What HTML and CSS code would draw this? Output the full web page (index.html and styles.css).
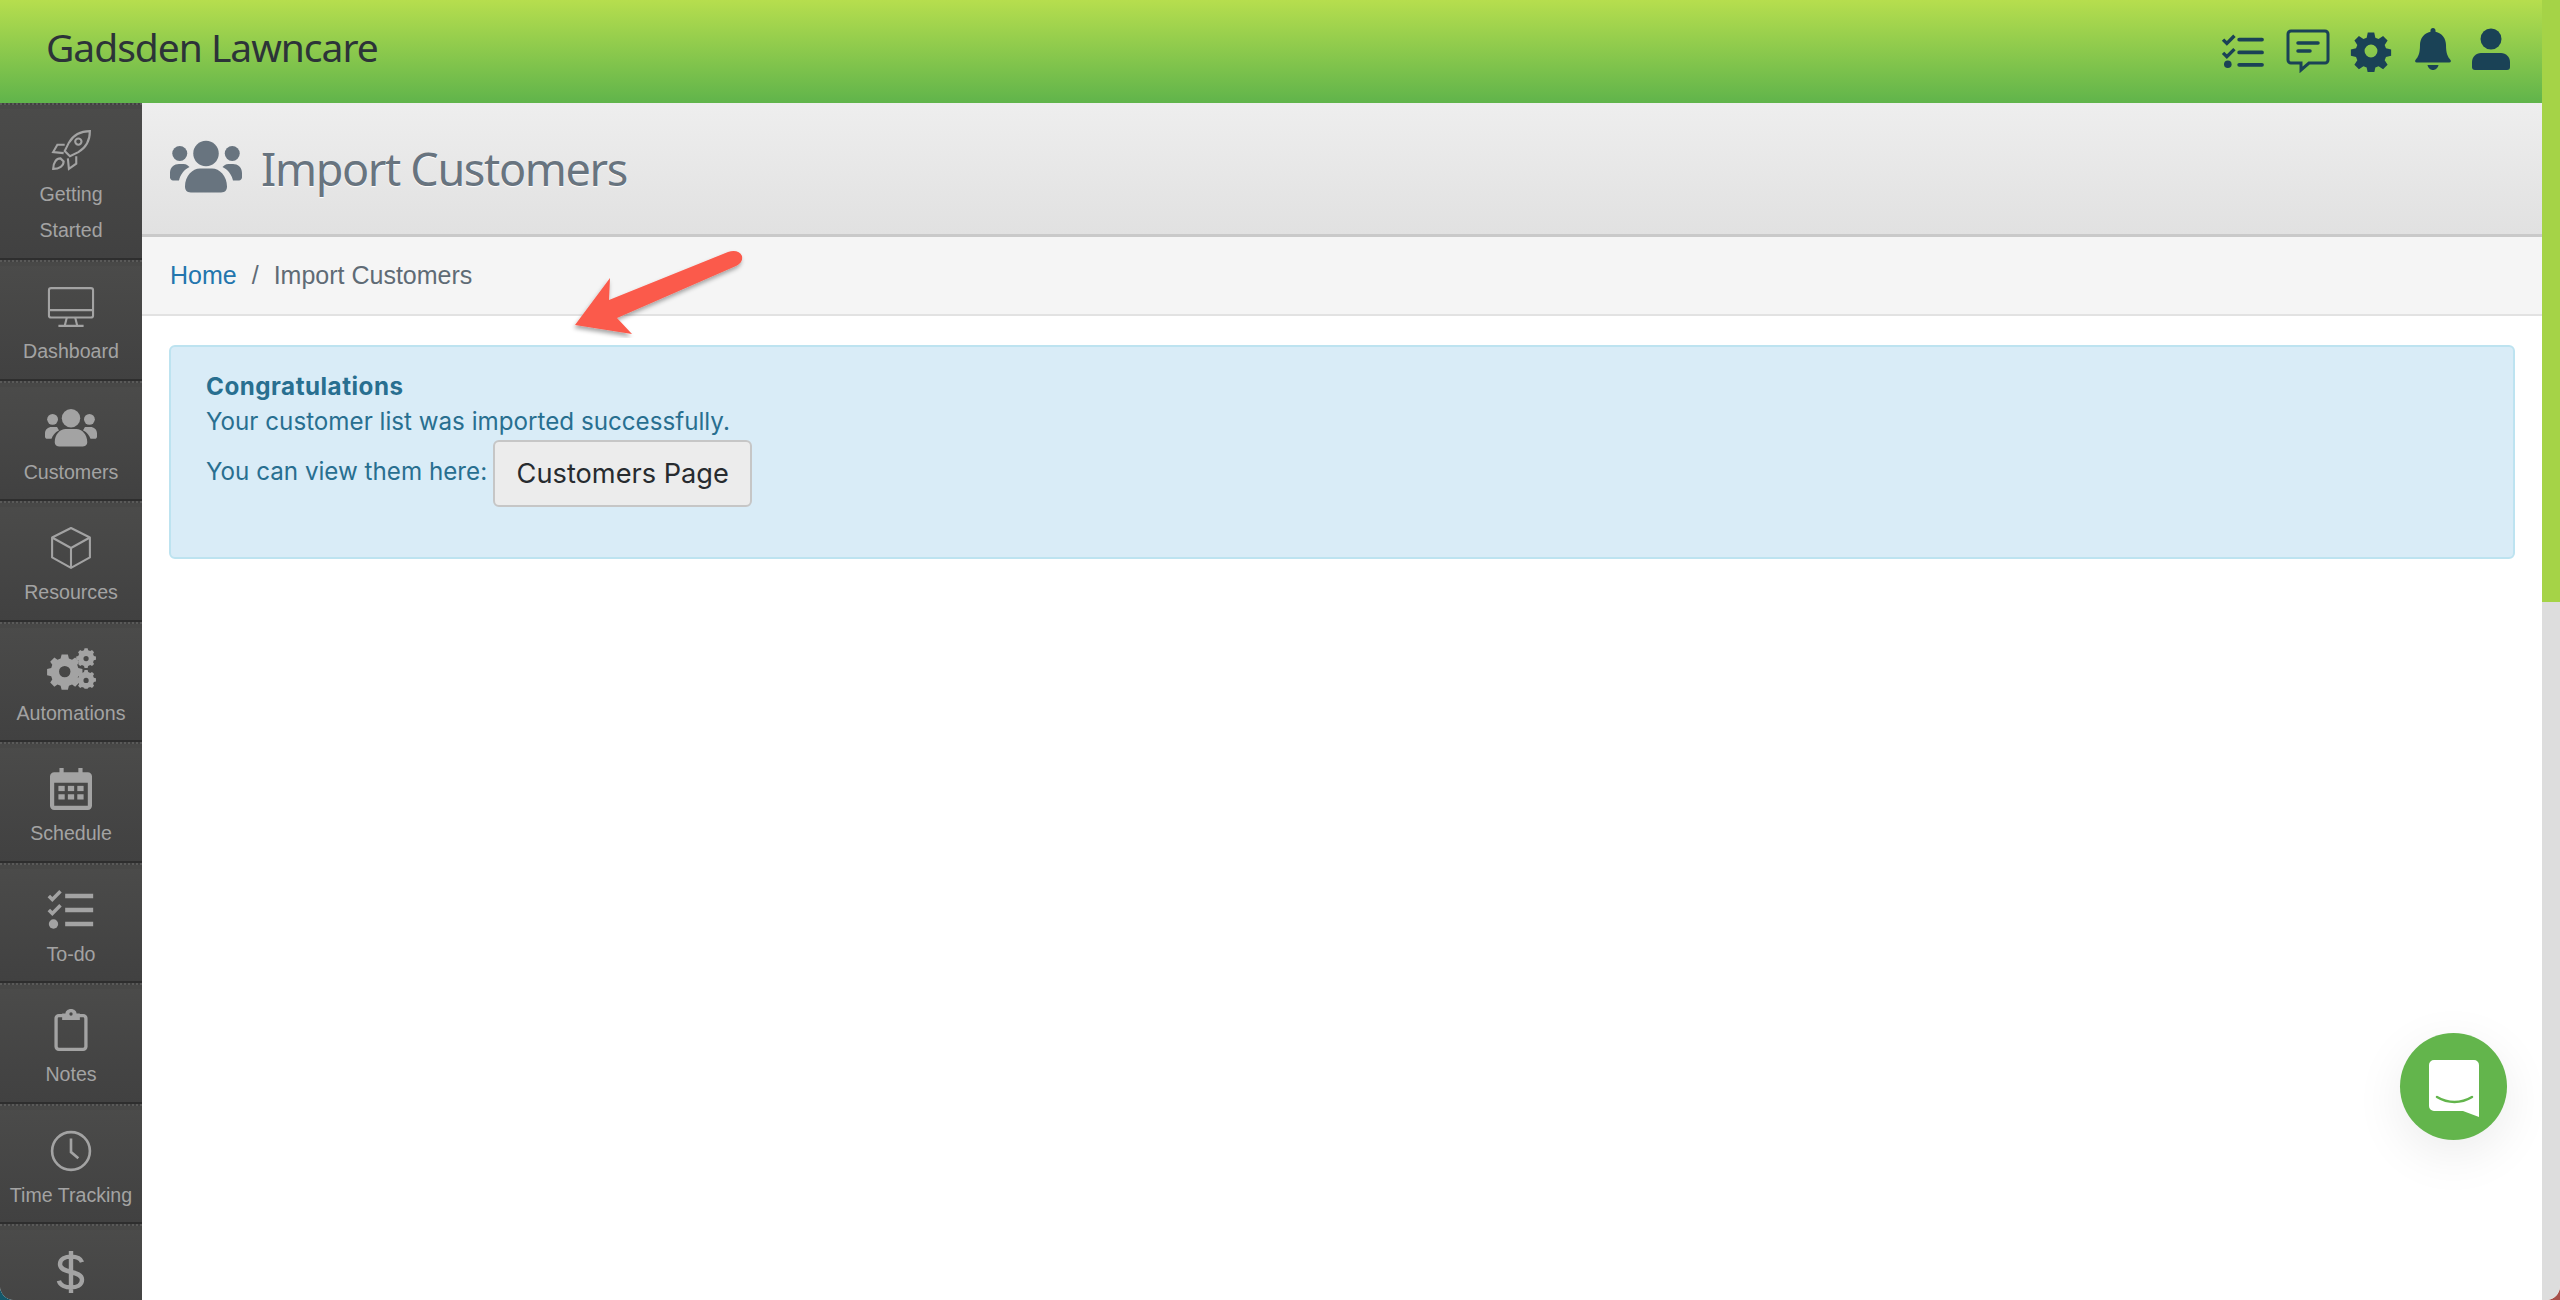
FILE: index.html
```html
<!DOCTYPE html>
<html lang="en">
<head>
<meta charset="utf-8">
<title>Import Customers</title>
<link rel="stylesheet" href="styles.css">
</head>
<body>
<div class="window">
  <div class="app">
    <header class="topbar">
      <div class="brand">Gadsden Lawncare</div>
      <nav class="top-icons">
        <svg class="ti ti-list" viewBox="0 0 44 40"><path class="dk" d="M1 8l4 4 8-8M1 22l4 4 8-8" fill="none" stroke-width="3.6"/><circle class="fl" cx="6" cy="34" r="4"/><path class="dk" d="M18 8h24M18 21.500h24M18 34.500h24" fill="none" stroke-width="4" stroke-linecap="round"/></svg>
        <svg class="ti ti-chat" viewBox="0 0 44 44"><path class="dk" d="M5 2h34a3 3 0 0 1 3 3v26a3 3 0 0 1-3 3H23l-8 7v-7H5a3 3 0 0 1-3-3V5a3 3 0 0 1 3-3z" fill="none" stroke-width="3"/><path class="dk" d="M12 14h20M12 22h12" fill="none" stroke-width="3.500" stroke-linecap="round"/></svg>
        <svg class="ti ti-gear" viewBox="0 0 24 24"><path class="fl" fill-rule="evenodd" d="M10 .5h4l.7 3.200 2 .8 2.800-1.800 2.800 2.800-1.800 2.800.8 2 3.200.7v4l-3.200.7-.8 2 1.800 2.800-2.800 2.800-2.800-1.800-2 .8-.7 3.200h-4l-.7-3.200-2-.8-2.800 1.800-2.800-2.800 1.800-2.800-.8-2-3.200-.7v-4l3.200-.7.8-2-1.800-2.800 2.800-2.800 2.800 1.800 2-.8zM12 8a4 4 0 1 0 0 8 4 4 0 0 0 0-8z" transform="translate(12 12) scale(.92) translate(-12 -12)"/></svg>
        <svg class="ti ti-bell" viewBox="0 0 36 42"><path class="fl" d="M18 0c1.500 0 2.500 1 2.500 2.500v1.200C27 5 31 10.500 31 17c0 9 2 12 4.500 15 .8 1 .3 2.500-1.200 2.500H1.700C.2 34.500-.3 33 .5 32 3 29 5 26 5 17 5 10.500 9 5 15.500 3.700V2.500C15.500 1 16.500 0 18 0zM12.500 37h11c-.5 2.800-2.800 5-5.500 5s-5-2.200-5.500-5z"/></svg>
        <svg class="ti ti-user" viewBox="0 0 38 42"><circle class="fl" cx="19" cy="11" r="10.500"/><path class="fl" d="M9 25h20c5 0 9 4 9 9v5a3 3 0 0 1-3 3H3a3 3 0 0 1-3-3v-5c0-5 4-9 9-9z"/></svg>
      </nav>
    </header>
    <div class="body">
      <aside class="sidebar">
        <a class="side-item tall">
          <svg class="si" viewBox="0 0 40 40"><g fill="none" class="st" stroke-width="2"><path d="M38 2c-9 0-16 4-20 11l-4 8 5 5 8-4c7-4 11-11 11-20z"/><circle cx="27" cy="12" r="3"/><path d="M14 15H7l-4 7 10 1M25 26v7l-7 5-1-10M10 28c-4 0-7 4-7 10 6 0 10-3 10-7z"/></g></svg>
          <span>Getting Started</span>
        </a>
        <a class="side-item">
          <svg class="si" viewBox="0 0 46 40"><g fill="none" class="st" stroke-width="2"><rect x="2" y="2" width="42" height="28" rx="2"/><path d="M2 23h42M19 30l-2 8M27 30l2 8M11 38h24"/></g></svg>
          <span>Dashboard</span>
        </a>
        <a class="side-item">
          <svg class="si" viewBox="0 0 48 36"><g class="sf"><circle cx="24" cy="9" r="8.500"/><circle cx="7" cy="10" r="5"/><circle cx="41" cy="10" r="5"/><path d="M13 35c-3 0-4-2-4-4 0-7 5-12 10-12h10c5 0 10 5 10 12 0 2-1 4-4 4zM0 23c0-4 3-6 6-6h5c1 1 1 2 2 3-4 2-6 5-7 8H2c-1 0-2-1-2-2zM48 23c0-4-3-6-6-6h-5c-1 1-1 2-2 3 4 2 6 5 7 8h4c1 0 2-1 2-2z"/></g></svg>
          <span>Customers</span>
        </a>
        <a class="side-item">
          <svg class="si" viewBox="0 0 40 40"><g fill="none" class="st" stroke-width="2" stroke-linejoin="round"><path d="M20 1l18 9v19l-18 10L2 29V10zM2 10l18 10 18-10M20 20v19"/></g></svg>
          <span>Resources</span>
        </a>
        <a class="side-item">
          <svg class="si" viewBox="0 0 50 40"><g class="sf"><path fill-rule="evenodd" d="M16 6h6l1 4 3 1 3-2 4 4-2 3 1 3 4 1v6l-4 1-1 3 2 3-4 4-3-2-3 1-1 4h-6l-1-4-3-1-3 2-4-4 2-3-1-3-4-1v-6l4-1 1-3-2-3 4-4 3 2 3-1zM19 17a5.500 5.500 0 1 0 0 11 5.500 5.500 0 0 0 0-11z"/><path fill-rule="evenodd" d="M38 0h3l.5 2 2 .8 1.700-1 2 2-1 1.700.8 2 2 .5v3l-2 .5-.8 2 1 1.700-2 2-1.700-1-2 .8-.5 2h-3l-.5-2-2-.8-1.700 1-2-2 1-1.700-.8-2-2-.5v-3l2-.5.8-2-1-1.700 2-2 1.700 1 2-.8zM39.500 7.500a2.500 2.500 0 1 0 0 5 2.500 2.500 0 0 0 0-5z"/><path fill-rule="evenodd" d="M38 21h3l.5 2 2 .8 1.700-1 2 2-1 1.700.8 2 2 .5v3l-2 .5-.8 2 1 1.700-2 2-1.700-1-2 .8-.5 1h-3l-.5-1-2-.8-1.700 1-2-2 1-1.700-.8-2-2-.5v-3l2-.5.8-2-1-1.700 2-2 1.700 1 2-.8zM39.500 28.500a2.500 2.500 0 1 0 0 5 2.500 2.500 0 0 0 0-5z"/></g></svg>
          <span>Automations</span>
        </a>
        <a class="side-item">
          <svg class="si" viewBox="0 0 40 40"><g class="sf"><path fill-rule="evenodd" d="M9 0h4v4h14V0h4v4h5a4 4 0 0 1 4 4v28a4 4 0 0 1-4 4H4a4 4 0 0 1-4-4V8a4 4 0 0 1 4-4h5zM4 14v22h32V14z"/><rect x="8" y="17" width="6" height="5"/><rect x="17" y="17" width="6" height="5"/><rect x="26" y="17" width="6" height="5"/><rect x="8" y="25" width="6" height="5"/><rect x="17" y="25" width="6" height="5"/><rect x="26" y="25" width="6" height="5"/></g></svg>
          <span>Schedule</span>
        </a>
        <a class="side-item">
          <svg class="si" viewBox="0 0 40 36"><path class="st" fill="none" d="M1 6l3 3 7-7M1 18l3 3 7-7" stroke-width="3"/><circle class="sf" cx="5" cy="30" r="4"/><path class="st" fill="none" d="M15 6h24M15 18h24M15 30h24" stroke-width="4"/></svg>
          <span>To-do</span>
        </a>
        <a class="side-item">
          <svg class="si" viewBox="0 0 30 38"><path class="st" fill="none" stroke-width="3" d="M9 6H4a2.500 2.500 0 0 0-2.500 2.500V34A2.500 2.500 0 0 0 4 36.500h22a2.500 2.500 0 0 0 2.500-2.500V8.500A2.500 2.500 0 0 0 26 6h-5"/><path class="sf" fill-rule="evenodd" d="M15 0c3 0 5 2 5 4h3v6H7V4h3c0-2 2-4 5-4zm0 3a1.500 1.500 0 1 0 0 3 1.500 1.500 0 0 0 0-3z"/></svg>
          <span>Notes</span>
        </a>
        <a class="side-item">
          <svg class="si" viewBox="0 0 40 40"><g fill="none" class="st" stroke-width="2.500"><circle cx="20" cy="20" r="18"/><path d="M20 8v13l7 6"/></g></svg>
          <span>Time Tracking</span>
        </a>
        <a class="side-item">
          <svg class="si si-dollar" viewBox="0 0 26 40"><path fill="none" class="st" stroke-width="4" d="M23 11c-1-3-5-5-10-5S3 8 3 13c0 9 20 5 20 14 0 5-5 7-10 7S3 32 2 28M13 1v38"/></svg>
        </a>
      </aside>
      <main class="content">
        <section class="page-head">
          <svg class="head-icon" viewBox="0 0 48 36"><g><circle cx="24" cy="9" r="8.500"/><circle cx="6.500" cy="9" r="5"/><circle cx="41.500" cy="9" r="5"/><path d="M14 35c-3 0-4-2-4-4 0-7 5-12 10-12h8c5 0 10 5 10 12 0 2-1 4-4 4zM0 22c0-4 3-6 6-6h3c2 0 3 1 4 2-4 2-6 5-7 9H2c-1 0-2-1-2-2zM48 22c0-4-3-6-6-6h-3c-2 0-3 1-4 2 4 2 6 5 7 9h4c1 0 2-1 2-2z"/></g></svg>
          <h1>Import Customers</h1>
        </section>
        <nav class="crumbs"><a>Home</a><span class="sep">/</span><span>Import Customers</span></nav>
        <section class="page-body">
          <div class="alert">
            <strong>Congratulations</strong>
            <div class="line">Your customer list was imported successfully.</div>
            <div class="view">You can view them here: <a class="btn">Customers Page</a></div>
          </div>
        </section>
      </main>
    </div>
    <svg class="arrow" viewBox="0 0 180 90"><defs><filter id="sh" x="-20%" y="-20%" width="140%" height="150%"><feDropShadow dx="-1" dy="3" stdDeviation="2" flood-color="#000" flood-opacity=".35"/></filter></defs><path filter="url(#sh)" fill="#fb5a4b" d="M5 77L40 30 39 52 158 4C164 2 170 3 172 8 173 13 170 16 166 18L47 70 62 86z"/></svg>
    <div class="chat"><svg viewBox="0 0 50 57"><path fill="#fff" fill-rule="evenodd" d="M5 0h40a5 5 0 0 1 5 5v52l-16-6H5a5 5 0 0 1-5-5V5a5 5 0 0 1 5-5z"/><path d="M8 37c5 3 11 5 17.500 5s12.500-2 17.500-5" fill="none" stroke="#63b54c" stroke-width="2.500" stroke-linecap="round"/></svg></div>
  </div>
  <div class="scrollbar"><div class="thumb"></div></div>
</div>
</body>
</html>
```
FILE: styles.css
```css
* { box-sizing: border-box; }
html, body { margin: 0; height: 100%; overflow: hidden; background: linear-gradient(90deg, #14586a 50%, #a8504a 50%); }
.window {
  position: relative; display: flex; width: 2560px; height: 1300px; overflow: hidden;
  background: #fff; border-radius: 0 0 14px 14px;
}
.app { position: relative; flex: 1; min-width: 0; display: flex; flex-direction: column; }
.scrollbar { width: 18px; background: #dddddd; display: flex; flex-direction: column; }
.thumb { height: 602px; background: #a5d347; }

.topbar {
  height: 103px; flex: none; display: flex; justify-content: space-between; align-items: flex-start;
  background: linear-gradient(#b6de4e, #60b44b);
  padding: 0 32px 0 46px;
}
.brand { font: 39px/94px "Noto Sans", sans-serif; letter-spacing: -1.030px; color: #2c3338; }
.top-icons { display: flex; align-items: flex-start; padding-top: 28px; }
.ti { display: block; height: 42px; }
.ti .dk, .dk { stroke: #1a4256; }
.ti .fl, .fl { fill: #1a4256; }
.ti-list { width: 44px; margin-right: 21px; height: 38px; margin-top: 4px; }
.ti-chat { width: 44px; margin-right: 20px; height: 44px; margin-top: 1px; }
.ti-gear { width: 42px; margin-right: 22px; margin-top: 2px; }
.ti-bell { width: 38px; margin-right: 20px; }
.ti-user { width: 38px; margin-right: 0; }

.body { flex: 1; min-height: 0; display: flex; }
.sidebar { width: 142px; flex: none; overflow: hidden; background: #444; border-bottom-left-radius: 14px; }
.side-item {
  display: flex; flex-direction: column; align-items: center; height: 120.500px; padding-top: 24px;
  background: linear-gradient(#4b4b4a, #414141);
  border-top: 2px dotted #5a5a59; border-bottom: 2px solid #2e2e2e;
  color: #a3a3a3; font: 19.600px/36px "Liberation Sans", sans-serif; text-align: center;
  box-shadow: inset 0 4px 0 #484847;
}
.side-item.tall { height: 157px; padding: 24px 22px 0; }
.si { display: block; height: 42px; width: 52px; flex: none; margin-bottom: 5px; }
.si-dollar { height: 44px; }
.st { stroke: #a3a3a3; }
.sf { fill: #a3a3a3; }

.content { flex: 1; min-width: 0; display: flex; flex-direction: column; background: linear-gradient(#fff 1230px, #eeeeee); }
.page-head {
  height: 134px; flex: none; display: flex; align-items: center; gap: 18px; padding: 0 0 0 27px;
  background: linear-gradient(#eeeeee, #e1e1e1); border-bottom: 3px solid #c9c9c9;
}
.head-icon { width: 74px; height: 54px; fill: #68747f; margin-top: -3px; }
.page-head h1 { margin: 0; font: 400 45px/1.2 "Noto Sans", sans-serif; letter-spacing: -1.350px; color: #68747f; text-shadow: 0 1px 1px #fff; }
.crumbs {
  height: 79px; flex: none; display: flex; align-items: center; padding: 0 0 0 28px;
  background: #f5f5f5; border-bottom: 2px solid #e2e2e2;
  font: 25px "Liberation Sans", sans-serif; color: #5f6b75;
}
.crumbs a { color: #2376ad; }
.sep { margin: 0 15px; }
.page-body { padding: 29px 27px 0 27px; }
.alert {
  height: 214px; padding: 22px 35px; border: 2px solid #bde3f0; border-radius: 6px;
  background: #d9ecf7; color: #286f90; font: 24.200px/35px "Inter", sans-serif;
}
.alert strong { display: block; font-weight: 700; letter-spacing: .5px; }
.view { display: flex; align-items: center; gap: 6px; height: 66px; margin-top: -1px; }
.btn {
  display: inline-block; height: 67px; padding: 0 21.500px; border: 2px solid #c6c6c6; border-radius: 6px;
  background: #ececec; color: #272b2f; font: 27.200px/63px "Inter", sans-serif; margin-top: 4px;
}

.arrow { position: absolute; left: 570px; top: 248px; width: 180px; height: 90px; }
.chat {
  position: absolute; left: 2400px; top: 1033px; width: 107px; height: 107px; border-radius: 50%;
  background: #63b54c; box-shadow: 0 14px 50px rgba(0,0,0,.08);
  display: flex; align-items: center; justify-content: center;
}
.chat svg { width: 50px; height: 57px; margin-top: 4px; }
```
